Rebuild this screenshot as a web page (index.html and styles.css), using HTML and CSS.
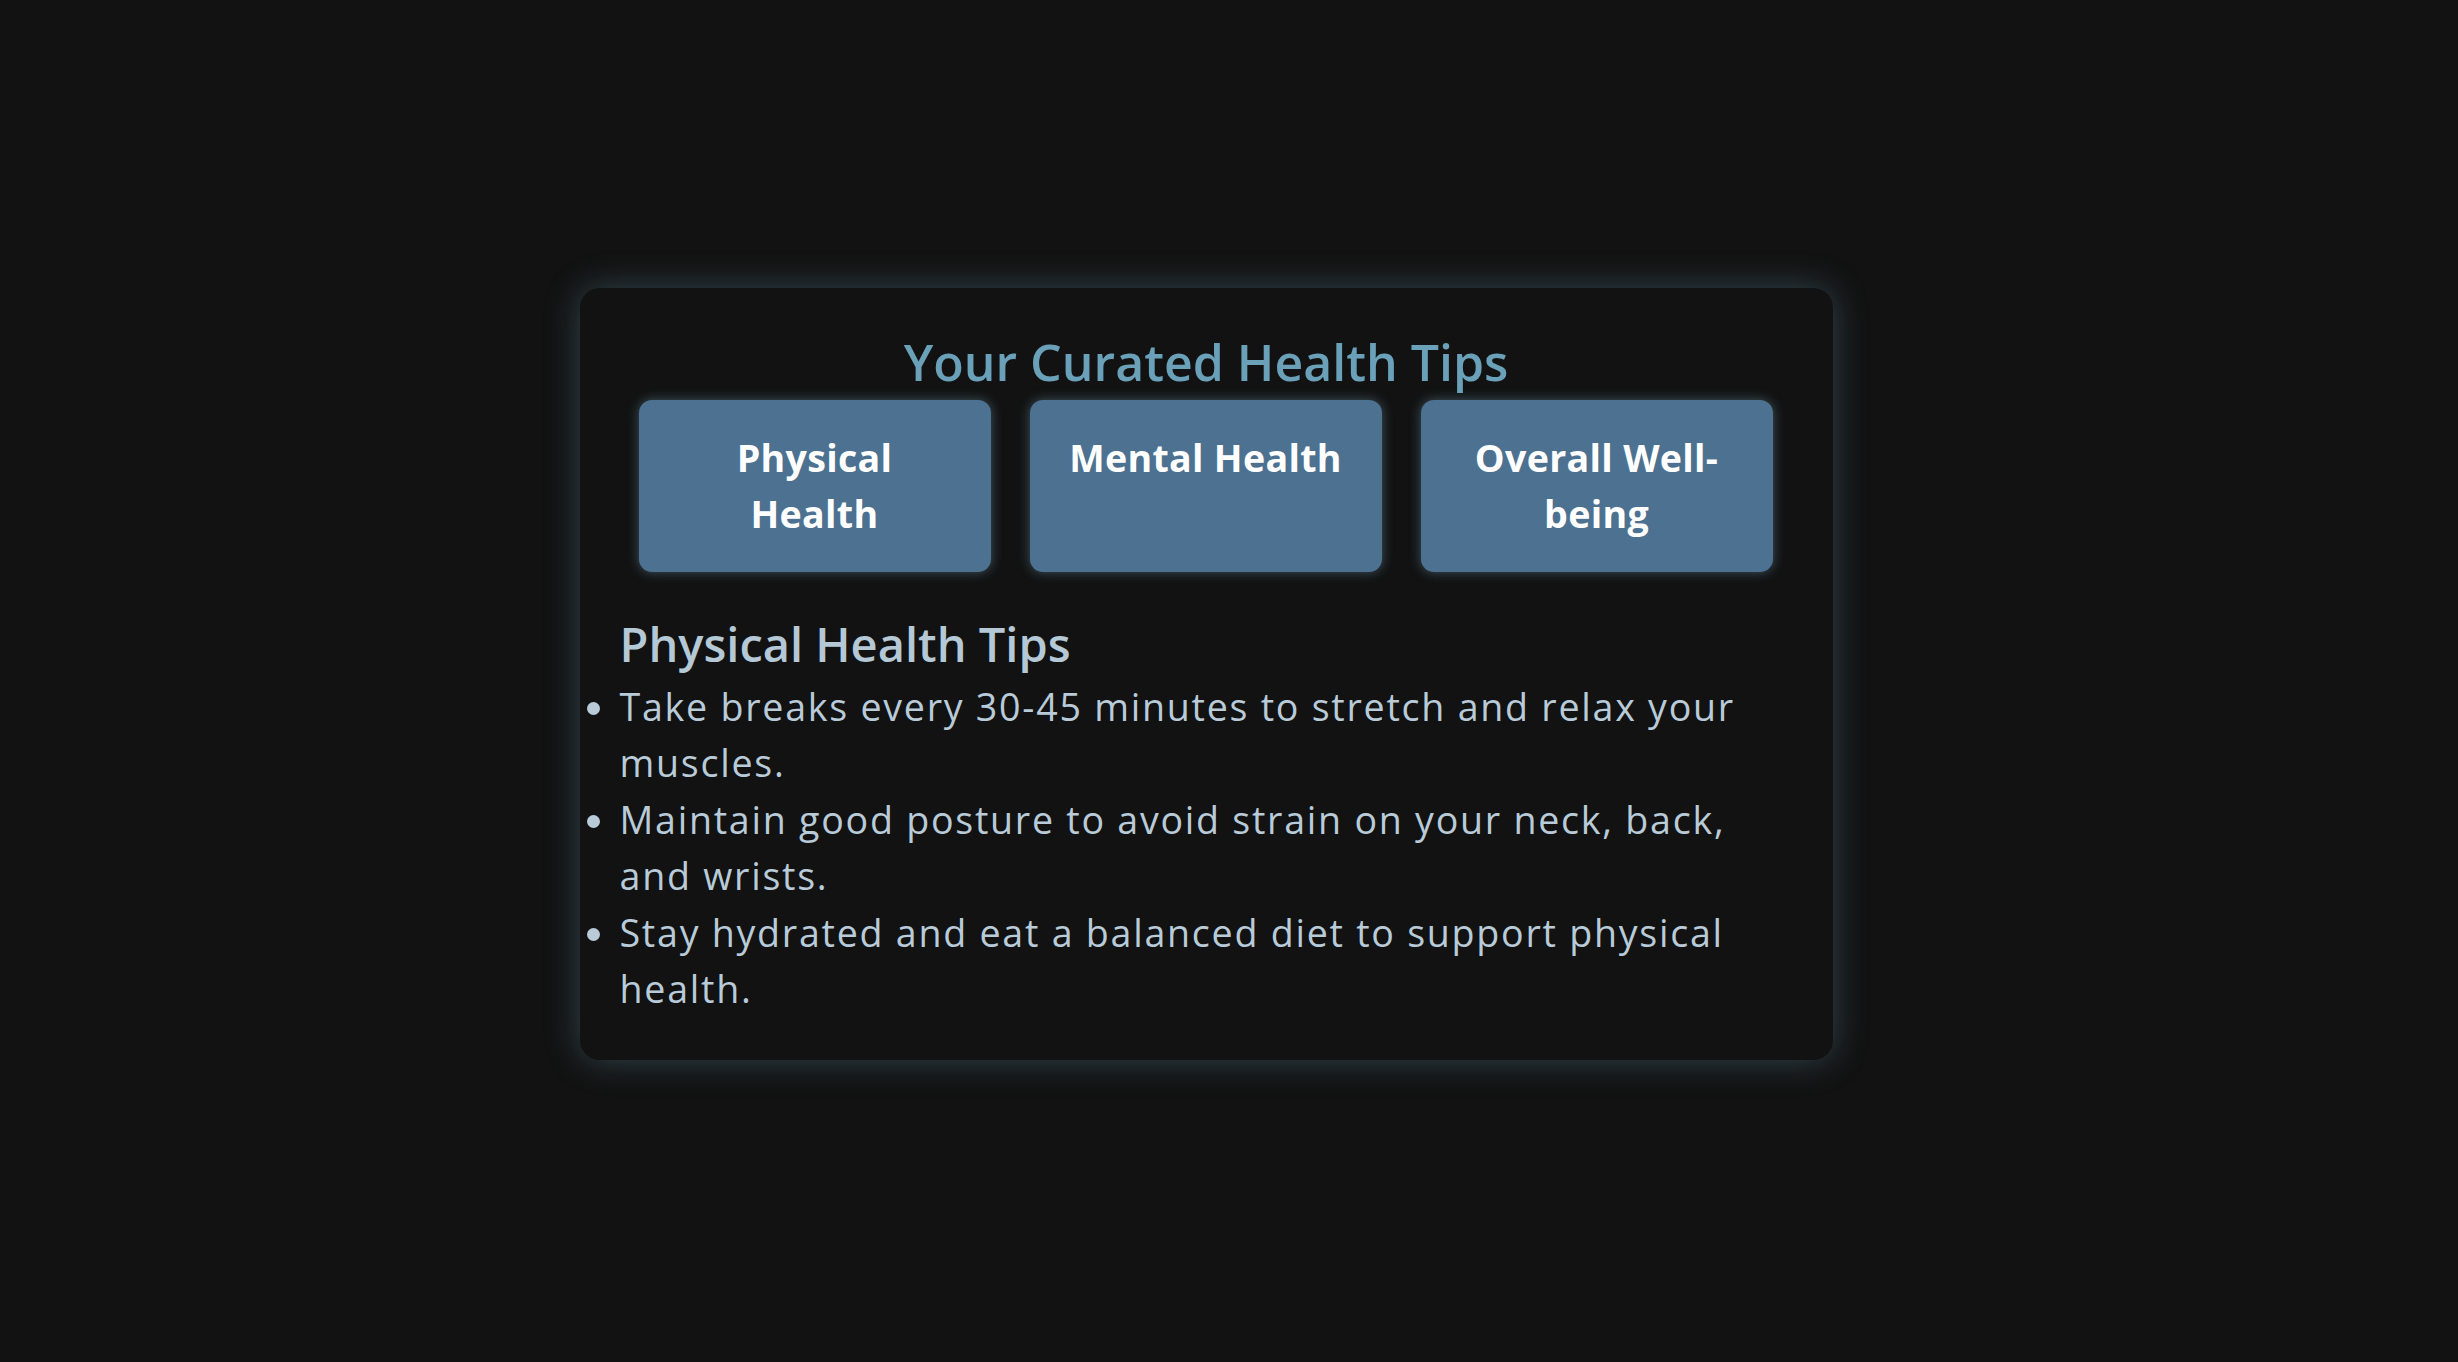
FILE: index.html
```html
<!DOCTYPE html>
<html lang="en">
<head>
<meta charset="utf-8">
<title>Your Curated Health Tips</title>
<link rel="stylesheet" href="styles.css">
</head>
<body>
<main class="card">
  <h1 class="title">Your Curated Health Tips</h1>
  <div class="tabs">
    <button class="tab">Physical<br>Health</button>
    <button class="tab">Mental Health</button>
    <button class="tab">Overall Well-<br>being</button>
  </div>
  <section class="tips">
    <h2 class="tips-heading">Physical Health Tips</h2>
    <ul class="tips-list">
      <li>Take breaks every 30-45 minutes to stretch and relax your muscles.</li>
      <li>Maintain good posture to avoid strain on your neck, back, and wrists.</li>
      <li>Stay hydrated and eat a balanced diet to support physical health.</li>
    </ul>
  </section>
</main>
</body>
</html>
```

FILE: styles.css
```css
* { box-sizing: border-box; }
html, body { margin: 0; height: 100%; }
body {
  background: #121212;
  font-family: "Open Sans", "Noto Sans", sans-serif;
  display: flex;
  justify-content: center;
  align-items: center;
  padding: 0 46px 14px 0;
}
.card {
  width: 1253px;
  background: #121212;
  border-radius: 20px;
  padding: 37px 40px 43px 40px;
  box-shadow: 0 0 34px rgba(106, 159, 184, 0.36);
}
.title {
  margin: 0;
  text-align: center;
  font-size: 50px;
  font-weight: 600;
  line-height: 75px;
  color: #6aa0b8;
}
.tabs {
  display: flex;
  gap: 39px;
  margin: 0 20px 0 19px;
}
.tab {
  flex: 1;
  height: 172px;
  padding: 30px 20px;
  border: none;
  border-radius: 13px;
  background: #4d7190;
  color: #ffffff;
  font-family: inherit;
  font-size: 37.6px;
  font-weight: 700;
  letter-spacing: 0.3px;
  line-height: 56.4px;
  text-align: center;
  display: flex;
  align-items: flex-start;
  justify-content: center;
  box-shadow: 0 0 12px rgba(120, 170, 195, 0.45);
}
.tips { padding-right: 20px; }
.tips-heading {
  margin: 37px 0 0;
  font-size: 47px;
  font-weight: 600;
  line-height: 70.5px;
  color: #b4c8d6;
}
.tips-list {
  margin: 0;
  padding: 0;
  font-size: 37.6px;
  letter-spacing: 1.75px;
  line-height: 56.4px;
  color: #b9cbd8;
}
```
